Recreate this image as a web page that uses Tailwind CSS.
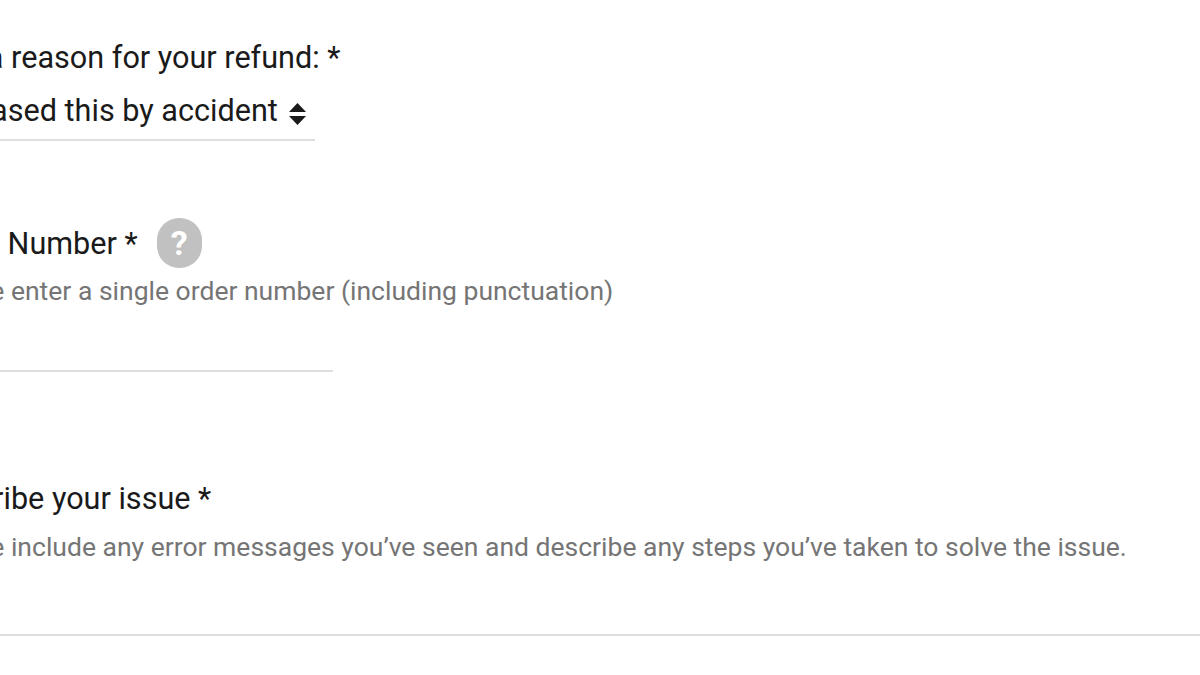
<!DOCTYPE html>
<html lang="en">
<head>
    <meta charset="UTF-8">
    <title>Refund Form</title>
    <script src="https://cdn.jsdelivr.net/npm/@tailwindcss/browser@4"></script>
</head>
<body class="bg-white overflow-hidden">
    <div class="w-[1200px] h-[675px] overflow-hidden font-['Roboto',sans-serif] text-[#1a1a1a]">
        <form class="-ml-[75px] w-[1275px] pt-[40px]">
            <!-- Refund reason -->
            <div>
                <label class="block -ml-[4px] text-[30.6px] leading-[36px] whitespace-nowrap">Pick a reason for your refund: *</label>
                <div class="mt-[17px] w-[390px] h-[36px] flex items-center gap-[11px] whitespace-nowrap text-[30.6px]">
                    <span class="-ml-[13px]">Purchased this by accident</span>
                    <svg class="w-[17px] h-[22px] mt-[5px] shrink-0" viewBox="0 0 17 22"><path d="M8.5 0 17 9H0zM8.5 22 0 13h17z" fill="#1a1a1a"/></svg>
                </div>
                <div class="mt-[10px] w-[390px] h-[2px] bg-[#dedede]"></div>
            </div>
            <!-- Order number -->
            <div class="mt-[77px]">
                <div class="flex items-center h-[50px] whitespace-nowrap">
                    <label class="mt-[1px] text-[30.6px]">Order Number *</label>
                    <span class="ml-[19px] w-[45px] h-[50px] rounded-[22px] bg-[#c1c1c1] text-white font-bold text-[34px] flex items-center justify-center">?</span>
                </div>
                <p class="text-[26.5px] leading-[46px] text-[#757575] whitespace-nowrap">Please enter a single order number (including punctuation)</p>
                <div class="mt-[56px] w-[408px] h-[2px] bg-[#dedede]"></div>
            </div>
            <!-- Issue description -->
            <div class="mt-[110px]">
                <label class="block -mt-[1px] text-[30.6px] leading-[36px] whitespace-nowrap">Describe your issue *</label>
                <p class="mt-[7px] text-[26.5px] leading-[46px] text-[#757575] whitespace-nowrap">Please include any error messages you’ve seen and describe any steps you’ve taken to solve the issue.</p>
                <div class="mt-[64px] w-full h-[2px] bg-[#dedede]"></div>
            </div>
        </form>
    </div>
</body>
</html>
